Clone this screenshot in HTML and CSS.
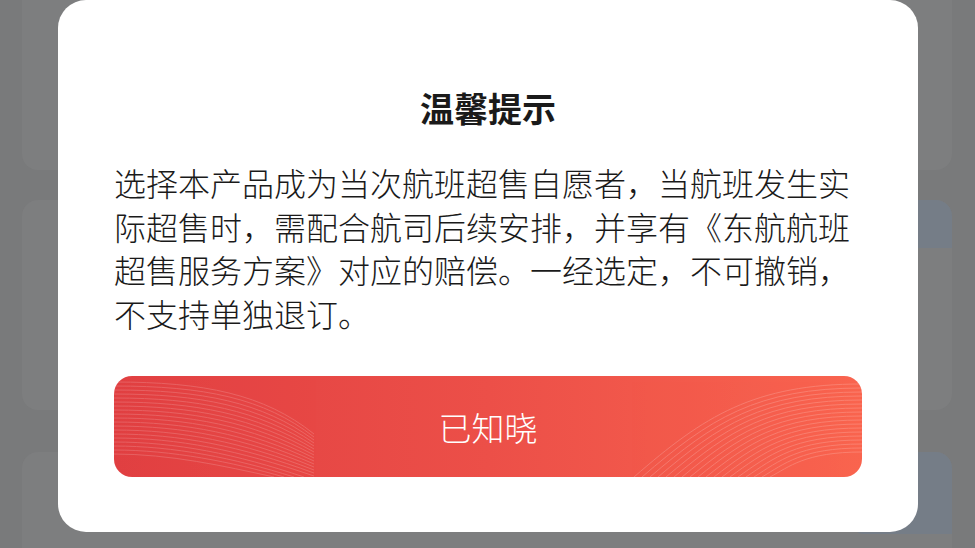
FILE: index.html
```html
<!DOCTYPE html>
<html lang="zh-CN">
<head>
<meta charset="utf-8">
<title>温馨提示</title>
<link rel="stylesheet" href="styles.css">
</head>
<body>
<div class="page">
  <div class="card card-a"></div>
  <div class="card card-b"><div class="tag tag-b"></div></div>
  <div class="card card-c"><div class="tag tag-c"></div></div>
</div>
<div class="modal">
  <h1 class="title">温馨提示</h1>
  <p class="text">选择本产品成为当次航班超售自愿者，当航班发生实际超售时，需配合航司后续安排，并享有《东航航班超售服务方案》对应的赔偿。一经选定，不可撤销，不支持单独退订。</p>
  <button class="btn">
    <svg class="waves" width="748" height="101" viewBox="0 0 748 101" preserveAspectRatio="none">
      <g fill="none" stroke="#ffffff" stroke-width="1" opacity="0.16">
        <path d="M0,6 C90,6 150,18 200,58"/>
        <path d="M0,10 C90,10 150,22 200,61"/>
        <path d="M0,14 C88,14 148,26 200,64"/>
        <path d="M0,18 C86,18 146,30 200,67"/>
        <path d="M0,22 C84,22 144,34 200,70"/>
        <path d="M0,26 C82,26 142,38 200,73"/>
        <path d="M0,30 C80,30 140,42 200,76"/>
        <path d="M0,34 C78,34 138,46 200,79"/>
        <path d="M0,38 C76,38 136,50 200,82"/>
        <path d="M0,42 C74,42 134,54 200,85"/>
        <path d="M0,46 C72,46 132,58 200,88"/>
        <path d="M0,50 C70,50 130,62 200,91"/>
        <path d="M0,54 C68,54 128,66 200,94"/>
        <path d="M0,58 C66,58 126,70 200,97"/>
        <path d="M0,62 C64,62 124,74 200,100"/>
        <path d="M0,66 C62,66 122,78 190,101"/>
        <path d="M0,70 C60,70 120,82 180,101"/>
        <path d="M0,74 C58,74 118,86 170,101"/>
        <path d="M0,78 C56,78 110,90 160,101"/>
      </g>
      <g fill="none" stroke="#ffffff" stroke-width="1" opacity="0.18">
        <path d="M748,8 C640,8 590,40 520,101"/>
        <path d="M748,12 C643,12 595,43 528,101"/>
        <path d="M748,16 C646,16 600,46 536,101"/>
        <path d="M748,20 C649,20 605,49 544,101"/>
        <path d="M748,24 C652,24 610,52 552,101"/>
        <path d="M748,28 C655,28 615,55 560,101"/>
        <path d="M748,32 C658,32 620,58 568,101"/>
        <path d="M748,36 C661,36 625,61 576,101"/>
        <path d="M748,40 C664,40 630,64 584,101"/>
        <path d="M748,44 C667,44 635,67 592,101"/>
        <path d="M748,48 C670,48 640,70 600,101"/>
        <path d="M748,52 C673,52 645,73 608,101"/>
        <path d="M748,56 C676,56 650,76 616,101"/>
        <path d="M748,60 C679,60 655,79 624,101"/>
        <path d="M748,64 C682,64 660,82 632,101"/>
        <path d="M748,68 C685,68 665,85 640,101"/>
        <path d="M748,72 C688,72 670,88 648,101"/>
        <path d="M748,76 C691,76 675,91 656,101"/>
      </g>
    </svg>
    <span class="btn-label">已知晓</span>
  </button>
</div>
</body>
</html>
```

FILE: styles.css
```css
html, body {
  margin: 0;
  padding: 0;
  width: 975px;
  height: 548px;
  overflow: hidden;
  background: #797a7b;
  font-family: "Noto Sans CJK SC", "Noto Sans", sans-serif;
}

.page {
  display: flex;
  flex-direction: column;
  padding: 0 23px 0 22px;
  height: 548px;
  box-sizing: border-box;
  overflow: hidden;
}

.card {
  background: #7d7e7f;
  border-radius: 16px;
  overflow: hidden;
  flex: none;
}

.card-a { height: 170px; border-radius: 0 0 16px 16px; }
.card-b { height: 210px; margin-top: 30px; }
.card-c { height: 110px; margin-top: 42px; border-radius: 16px 16px 0 0; }

.tag {
  margin-left: auto;
  width: 100px;
  border-radius: 0 12px 0 12px;
  background: #757d87;
}

.tag-b { height: 48px; }
.tag-c { height: 82px; }

.modal {
  position: absolute;
  left: 58px;
  top: 0;
  width: 860px;
  height: 532px;
  box-sizing: border-box;
  background: #ffffff;
  border-radius: 28px;
  padding: 86px 56px 55px;
  display: flex;
  flex-direction: column;
}

.title {
  margin: 0;
  font-size: 34px;
  line-height: 44px;
  font-weight: 700;
  color: #1a1a1a;
  text-align: center;
}

.text {
  margin: 31px 0 0;
  font-size: 32px;
  line-height: 43.5px;
  color: #1a1a1a;
  font-weight: 300;
}

.btn {
  margin-top: 41px;
  position: relative;
  width: 748px;
  height: 101px;
  flex: none;
  border: none;
  border-radius: 18px;
  padding: 0;
  background: linear-gradient(90deg, #e14042 0%, #ec4f48 50%, #f9644f 100%);
  overflow: hidden;
  display: flex;
  align-items: center;
  justify-content: center;
  font-family: inherit;
}

.waves {
  position: absolute;
  left: 0;
  top: 0;
}

.btn-label {
  position: relative;
  color: #ffffff;
  font-size: 33px;
  font-weight: 300;
  line-height: 40px;
}
```
